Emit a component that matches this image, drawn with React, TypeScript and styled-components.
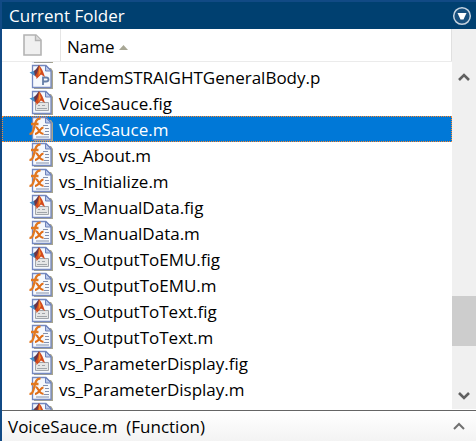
import React from "react";
import styled, { createGlobalStyle } from "styled-components";

type Kind = "fig" | "m" | "p";

const files: { name: string; kind: Kind }[] = [
  { name: "TandemSTRAIGHTGeneralBody.p", kind: "p" },
  { name: "VoiceSauce.fig", kind: "fig" },
  { name: "VoiceSauce.m", kind: "m" },
  { name: "vs_About.m", kind: "m" },
  { name: "vs_Initialize.m", kind: "m" },
  { name: "vs_ManualData.fig", kind: "fig" },
  { name: "vs_ManualData.m", kind: "m" },
  { name: "vs_OutputToEMU.fig", kind: "fig" },
  { name: "vs_OutputToEMU.m", kind: "m" },
  { name: "vs_OutputToText.fig", kind: "fig" },
  { name: "vs_OutputToText.m", kind: "m" },
  { name: "vs_ParameterDisplay.fig", kind: "fig" },
  { name: "vs_ParameterDisplay.m", kind: "m" },
];

const Global = createGlobalStyle`
  * { box-sizing: border-box; }
  body { margin: 0; background: #fff; }
  button { font: inherit; color: inherit; border: 0; padding: 0; background: none; text-align: left; }
  svg { display: block; flex: none; }
`;

const Panel = styled.main`
  display: flex;
  flex-direction: column;
  height: 100vh;
  border: 2px solid #114a85;
  border-width: 2px 0 0 2px;
  font-family: "Open Sans", "Noto Sans", sans-serif;
  font-size: 17px;
  line-height: 26px;
  color: #000;
`;

const TitleBar = styled.header`
  display: flex;
  align-items: center;
  justify-content: space-between;
  height: 27px;
  flex: none;
  padding: 0 4px 0 7px;
  background: #004070;
  color: #fff;
`;

const Title = styled.h1`
  margin: 0;
  font-size: 17px;
  font-weight: 400;
`;

const Body = styled.div`
  display: flex;
  flex: 1;
  min-height: 0;
`;

const Listing = styled.section`
  display: flex;
  flex-direction: column;
  flex: 1;
  min-width: 0;
`;

const ColumnHeader = styled.div`
  display: flex;
  height: 33px;
  flex: none;
  border-bottom: 1px solid #ebebeb;
`;

const IconColumn = styled.div`
  display: flex;
  align-items: center;
  width: 59px;
  padding-left: 21px;
  border-right: 1px solid #e5e5e5;
`;

const NameColumn = styled.button`
  display: flex;
  align-items: center;
  flex: 1;
  gap: 4px;
  padding: 4px 0 0 6px;
  border-right: 1px solid #e0e0e0;
`;

const Viewport = styled.div`
  flex: 1;
  min-height: 0;
  overflow: hidden;
`;

const Rows = styled.ul`
  margin: -24px 0 0;
  padding: 0;
  list-style: none;
`;

const Row = styled.li<{ $selected?: boolean }>`
  display: flex;
  align-items: center;
  height: 26px;
  padding-left: 26px;
  gap: 6px;
  white-space: nowrap;
  color: ${(p) => (p.$selected ? "#fff" : "#000")};
  background: ${(p) => (p.$selected ? "#0078d7" : "transparent")};
  outline: ${(p) => (p.$selected ? "1px dotted #ff8728" : "none")};
  outline-offset: -1px;
`;

const FileName = styled.span`
  padding-top: 2px;
`;

const ScrollBar = styled.div`
  display: flex;
  flex-direction: column;
  width: 24px;
  flex: none;
  margin-bottom: 1px;
  background: #f0f0f0;
`;

const ScrollButton = styled.button<{ $tall?: boolean }>`
  display: flex;
  justify-content: center;
  align-items: ${(p) => (p.$tall ? "flex-end" : "center")};
  height: ${(p) => (p.$tall ? "53px" : "26px")};
`;

const Track = styled.div`
  display: grid;
  grid-template-rows: 214fr 50fr 37fr;
  flex: 1;
`;

const Thumb = styled.div`
  grid-row: 2;
  background: #cdcdcd;
`;

const StatusBar = styled.footer`
  display: flex;
  align-items: center;
  justify-content: space-between;
  height: 31px;
  flex: none;
  padding: 2px 11px 0 6px;
  border-top: 1px solid #646464;
  background: linear-gradient(#fff, #f3f3f3);
  white-space: pre;
`;

function Chevron({ down }: { down?: boolean }) {
  return (
    <svg width="12" height="10" viewBox="0 0 12 10">
      <path d={down ? "M1 2 L6 7 L11 2" : "M1 8 L6 3 L11 8"} fill="none" stroke="#606060" strokeWidth="2.6" />
    </svg>
  );
}

function FileIcon({ kind }: { kind: Kind }) {
  return (
    <svg width="25" height="26" viewBox="0 0 25 26">
      <path d="M6 4H23L25 7V25H6Z" fill="#aaa68d" />
      <path d="M4.500 1.500H18L23 6.500V23.500H4.500Z" fill="#f5f8fd" stroke="#7488c0" strokeWidth="1.300" />
      <path d="M17.500 1.500V7H23Z" fill="#b9c8ea" stroke="#6f83bb" />
      {kind === "m" ? (
        <g fill="none">
          <path d="M15 9.500H20M17 12.500H21M17 15.500H21M16 18.500H21M8 21H21" stroke="#8490ac" strokeWidth="1.200" />
          <path d="M1.500 17.500C4 18.500 5 16 6 12S8 1.500 12.500 2.800M3 8H10.500" stroke="#e27820" strokeWidth="2.300" />
          <path d="M7.500 11.500C10 10 11 19 15.500 17.500M15.500 11.500C12 11.500 11 18 7 18" stroke="#e06e18" strokeWidth="2" />
        </g>
      ) : (
        <g>
          {kind === "p" ? (
            <path d="M15 21V13.500H18Q20.500 13.500 20.500 15.500T18 17.500H15" fill="none" stroke="#657ea8" strokeWidth="1.800" />
          ) : (
            <g fill="none" stroke="#a0a5aa">
              <path d="M7.500 12.500H20.500V20.500H7.500Z" fill="#e5e6e6" />
              <path d="M9 18.500H19M10 15.500H12M14 15.500H17" />
            </g>
          )}
          <path d="M1.500 8.500L7 6.500L10 9L7 12Z" fill="#438bc7" />
          <path d="M6 7Q8.500 5 11 1L11.500 11L7 12Z" fill="#693748" />
          <path d="M11 1Q14 4 17 13L13 10.500L8.500 15Q9 13 7 12Q10 9 11 1Z" fill="#d34a1d" />
          <path d="M11 2L13 8L10.500 12Z" fill="#f59332" />
        </g>
      )}
    </svg>
  );
}

export default function App() {
  return (
    <Panel>
      <Global />
      <TitleBar>
        <Title>Current Folder</Title>
        <button aria-label="Panel actions">
          <svg width="20" height="20" viewBox="0 0 20 20">
            <circle cx="10" cy="10" r="8.300" fill="#174f7d" stroke="#c4d2df" strokeWidth="1.500" />
            <path d="M5.500 7H14.500L11.500 13.500H8.500Z" fill="#fff" />
          </svg>
        </button>
      </TitleBar>
      <Body>
        <Listing>
          <ColumnHeader>
            <IconColumn>
              <svg width="19" height="22" viewBox="0 0 19 22">
                <path d="M1 1H13L18 6V21H1Z" fill="#f0f0f0" stroke="#b3b3b3" strokeWidth="1.600" />
                <path d="M12.500 1V6.500H18" fill="#ddd" stroke="#b3b3b3" strokeWidth="1.400" />
              </svg>
            </IconColumn>
            <NameColumn>
              Name
              <svg width="9" height="5" viewBox="0 0 9 5"><path d="M0 5L4.500 0L9 5Z" fill="#a8a795" /></svg>
            </NameColumn>
          </ColumnHeader>
          <Viewport>
            <Rows>
              <Row><FileIcon kind="m" /></Row>
              {files.map((f) => (
                <Row key={f.name} $selected={f.name === "VoiceSauce.m"}>
                  <FileIcon kind={f.kind} />
                  <FileName>{f.name}</FileName>
                </Row>
              ))}
              <Row><FileIcon kind="fig" /></Row>
            </Rows>
          </Viewport>
        </Listing>
        <ScrollBar>
          <ScrollButton $tall aria-label="Scroll up"><Chevron /></ScrollButton>
          <Track><Thumb /></Track>
          <ScrollButton aria-label="Scroll down"><Chevron down /></ScrollButton>
        </ScrollBar>
      </Body>
      <StatusBar>
        <span>VoiceSauce.m  (Function)</span>
        <button aria-label="Show details">
          <svg width="12" height="10" viewBox="0 0 12 10">
            <path d="M1 7L6 2L11 7" fill="none" stroke="#707070" strokeWidth="2" />
          </svg>
        </button>
      </StatusBar>
    </Panel>
  );
}
